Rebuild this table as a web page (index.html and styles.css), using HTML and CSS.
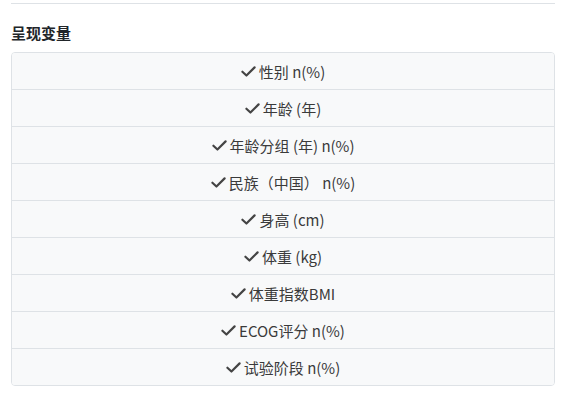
FILE: index.html
```html
<!DOCTYPE html>
<html>
<head>
<meta charset="utf-8">
<link rel="stylesheet" href="styles.css">
</head>
<body>
<div class="wrap">
  <div class="rule"></div>
  <h3 class="title">呈现变量</h3>
  <ul class="list">
    <li class="item"><svg class="chk" viewBox="0 0 16 16"><path d="M1.5 8.2 L5.8 12.3 L14.5 3.6"/></svg>性别 n(%)</li>
    <li class="item"><svg class="chk" viewBox="0 0 16 16"><path d="M1.5 8.2 L5.8 12.3 L14.5 3.6"/></svg>年龄 (年)</li>
    <li class="item"><svg class="chk" viewBox="0 0 16 16"><path d="M1.5 8.2 L5.8 12.3 L14.5 3.6"/></svg>年龄分组 (年) n(%)</li>
    <li class="item"><svg class="chk" viewBox="0 0 16 16"><path d="M1.5 8.2 L5.8 12.3 L14.5 3.6"/></svg>民族（中国） n(%)</li>
    <li class="item"><svg class="chk" viewBox="0 0 16 16"><path d="M1.5 8.2 L5.8 12.3 L14.5 3.6"/></svg>身高 (cm)</li>
    <li class="item"><svg class="chk" viewBox="0 0 16 16"><path d="M1.5 8.2 L5.8 12.3 L14.5 3.6"/></svg>体重 (kg)</li>
    <li class="item"><svg class="chk" viewBox="0 0 16 16"><path d="M1.5 8.2 L5.8 12.3 L14.5 3.6"/></svg>体重指数BMI</li>
    <li class="item"><svg class="chk" viewBox="0 0 16 16"><path d="M1.5 8.2 L5.8 12.3 L14.5 3.6"/></svg>ECOG评分 n(%)</li>
    <li class="item"><svg class="chk" viewBox="0 0 16 16"><path d="M1.5 8.2 L5.8 12.3 L14.5 3.6"/></svg>试验阶段 n(%)</li>
  </ul>
</div>
</body>
</html>
```
FILE: styles.css
```css
html, body {
  margin: 0;
  padding: 0;
  background: #fff;
}
body {
  font-family: "Noto Sans CJK SC", "Noto Sans", sans-serif;
  color: #333;
}
.wrap {
  padding: 3px 15px 0 11px;
}
.rule {
  height: 1px;
  background: #dee2e6;
}
.title {
  margin: 18px 0 0 0;
  font-size: 15px;
  line-height: 22px;
  font-weight: 700;
  color: #212529;
}
.list {
  list-style: none;
  margin: 8px 0 0 0;
  padding: 0;
  border: 1px solid #dee2e6;
  border-radius: 4px;
  overflow: hidden;
}
.item {
  height: 36px;
  display: flex;
  align-items: center;
  justify-content: center;
  background: #f8f9fa;
  font-size: 15px;
  color: #3a3a3a;
  border-top: 1px solid #dee2e6;
}
.item:first-child {
  border-top: none;
}
.chk {
  width: 15px;
  height: 15px;
  fill: none;
  stroke: #444;
  stroke-width: 2.3;
  stroke-linecap: round;
  stroke-linejoin: round;
  margin-right: 3px;
}
```
